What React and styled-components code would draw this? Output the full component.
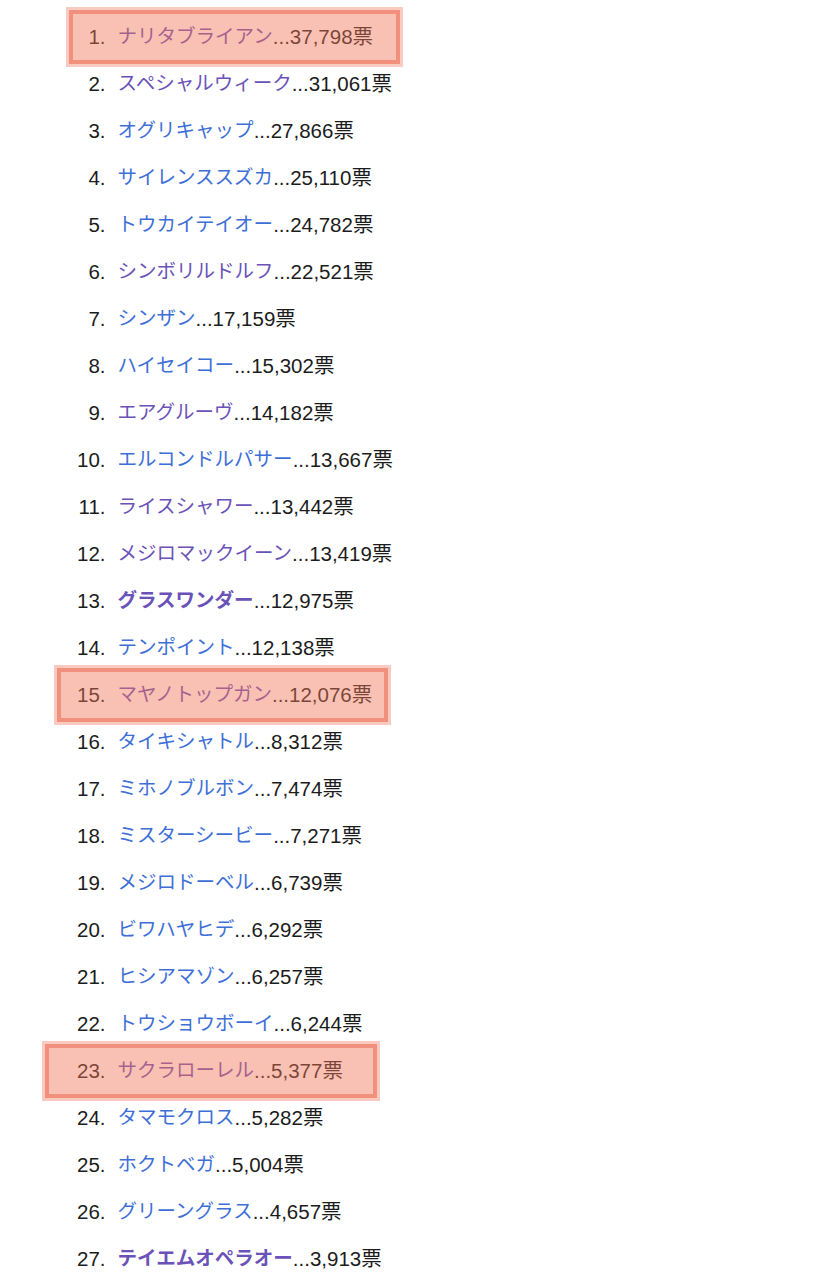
import React from "react";
import styled, { createGlobalStyle } from "styled-components";

const Global = createGlobalStyle`
  html, body { margin: 0; padding: 0; background: #ffffff; }
  body {
    font-family: "Liberation Sans", "Noto Sans CJK JP", sans-serif;
    color: #1c1c1c;
  }
`;

const List = styled.ol`
  list-style: none;
  margin: 0;
  padding: 13px 0 0 60px;
  font-size: 19.5px;
  line-height: 47px;
`;

const Row = styled.li`
  position: relative;
  display: flex;
  align-items: center;
  height: 47px;
  white-space: nowrap;
`;

const Num = styled.span`
  width: 45.5px;
  text-align: right;
  margin-right: 12px;
  flex: none;
  font-size: 20.5px;
`;

const Name = styled.a`
  color: ${(p) => (p.$visited ? "#6b52b8" : "#3e6fd7")};
  font-weight: ${(p) => (p.$bold ? 700 : 400)};
  text-decoration: none;
`;

const Votes = styled.span`
  font-size: 20.5px;
`;

const Highlight = styled.div`
  position: absolute;
  top: 50%;
  height: 60px;
  margin-top: -30px;
  box-sizing: border-box;
  border: 3px solid rgba(242, 140, 115, 0.45);
  background: rgba(240, 118, 88, 0.45);
  background-clip: padding-box;
  box-shadow: inset 0 0 0 4px rgba(236, 112, 86, 0.6);
  pointer-events: none;
`;

const data = [
  { name: "ナリタブライアン", votes: "37,798", visited: true, hl: { left: 6, width: 337 } },
  { name: "スペシャルウィーク", votes: "31,061", visited: true },
  { name: "オグリキャップ", votes: "27,866" },
  { name: "サイレンススズカ", votes: "25,110" },
  { name: "トウカイテイオー", votes: "24,782" },
  { name: "シンボリルドルフ", votes: "22,521", visited: true },
  { name: "シンザン", votes: "17,159" },
  { name: "ハイセイコー", votes: "15,302" },
  { name: "エアグルーヴ", votes: "14,182", visited: true },
  { name: "エルコンドルパサー", votes: "13,667" },
  { name: "ライスシャワー", votes: "13,442", visited: true },
  { name: "メジロマックイーン", votes: "13,419", visited: true },
  { name: "グラスワンダー", votes: "12,975", visited: true, bold: true },
  { name: "テンポイント", votes: "12,138" },
  { name: "マヤノトップガン", votes: "12,076", visited: true, hl: { left: -6, width: 337 } },
  { name: "タイキシャトル", votes: "8,312" },
  { name: "ミホノブルボン", votes: "7,474" },
  { name: "ミスターシービー", votes: "7,271" },
  { name: "メジロドーベル", votes: "6,739" },
  { name: "ビワハヤヒデ", votes: "6,292" },
  { name: "ヒシアマゾン", votes: "6,257" },
  { name: "トウショウボーイ", votes: "6,244" },
  { name: "サクラローレル", votes: "5,377", visited: true, hl: { left: -18, width: 338 } },
  { name: "タマモクロス", votes: "5,282" },
  { name: "ホクトベガ", votes: "5,004" },
  { name: "グリーングラス", votes: "4,657" },
  { name: "テイエムオペラオー", votes: "3,913", visited: true, bold: true },
];

export default function App() {
  return (
    <>
      <Global />
      <List>
        {data.map((d, i) => (
          <Row key={i}>
            <Num>{i + 1}.</Num>
            <Name href="#" $visited={d.visited} $bold={d.bold}>
              {d.name}
            </Name>
            <Votes>...{d.votes}票</Votes>
            {d.hl && (
              <Highlight style={{ left: d.hl.left, width: d.hl.width }} />
            )}
          </Row>
        ))}
      </List>
    </>
  );
}
